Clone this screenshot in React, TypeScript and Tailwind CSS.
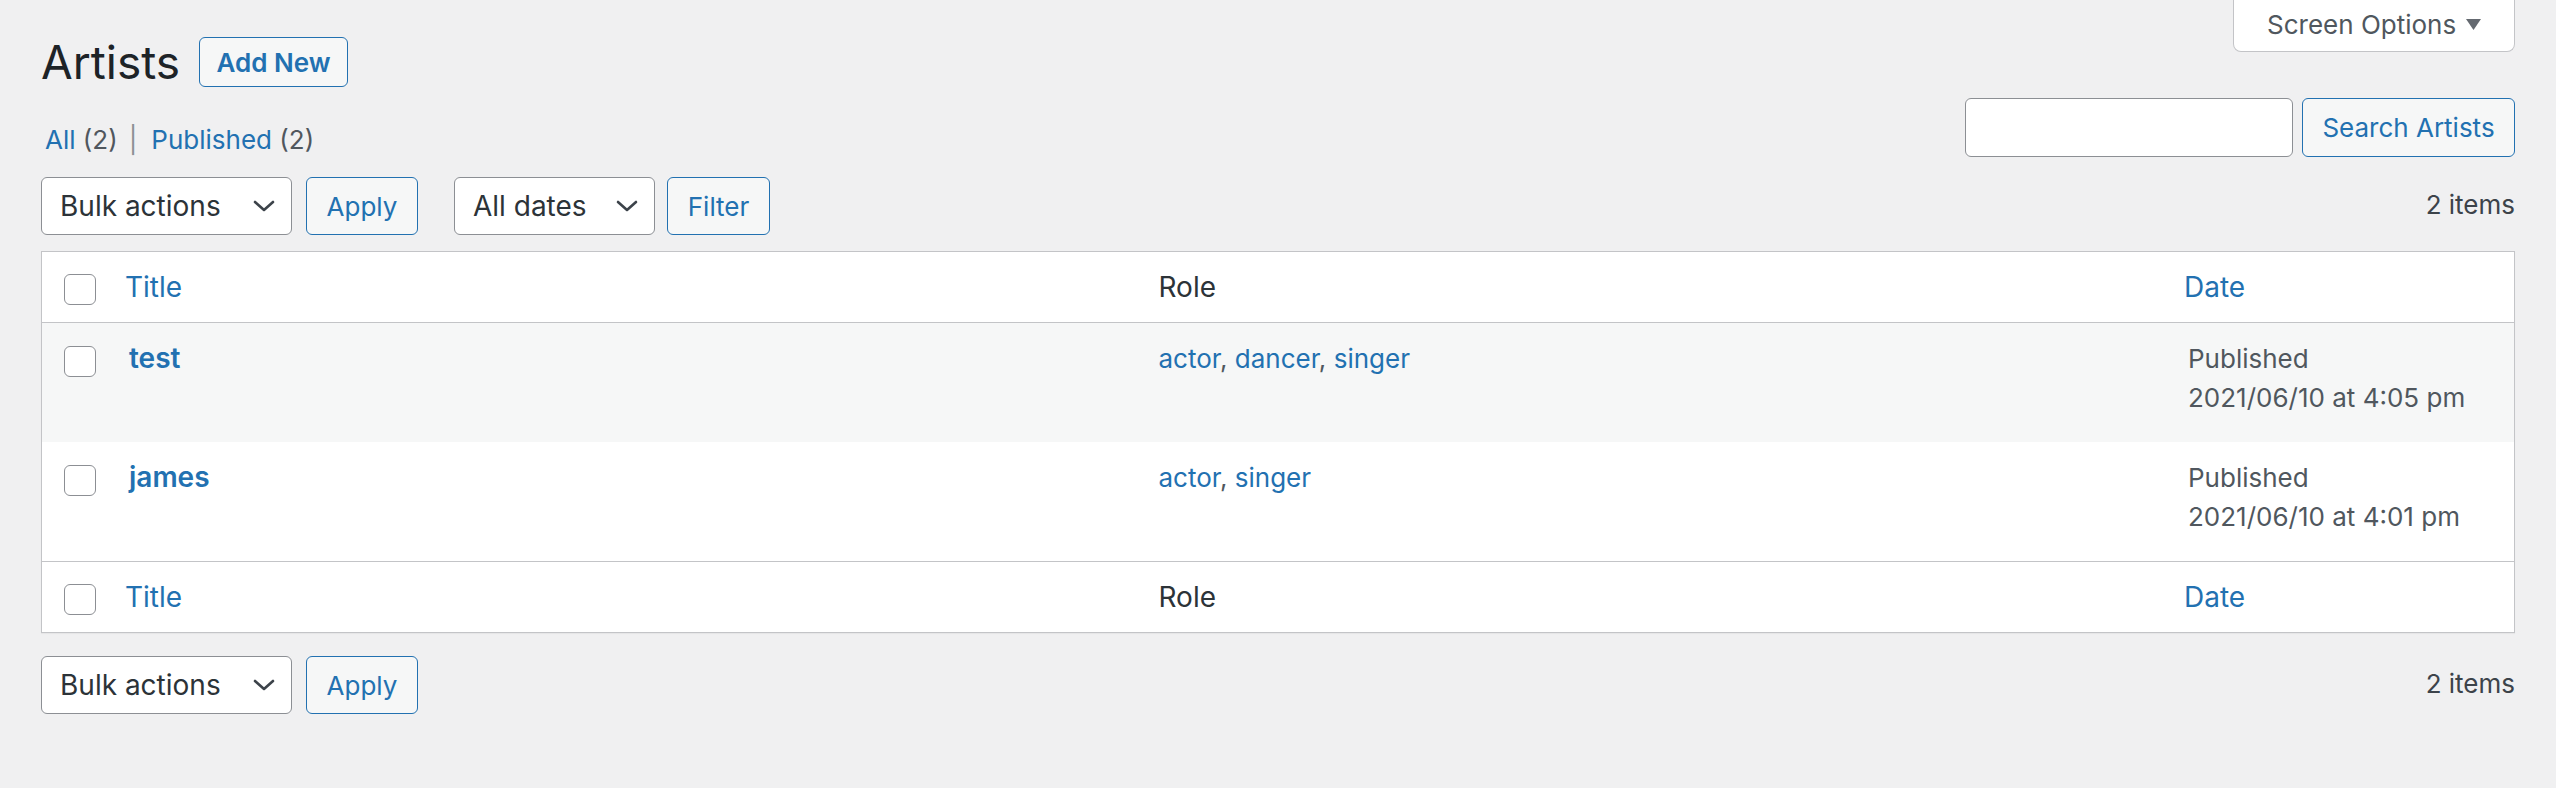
import React from 'react'

const rows = [
  { title: 'test', roles: ['actor', 'dancer', 'singer'], date: '2021/06/10 at 4:05 pm', striped: true },
  { title: 'james', roles: ['actor', 'singer'], date: '2021/06/10 at 4:01 pm', striped: false },
]

function Checkbox() {
  return <div className="w-[32px] h-[31px] rounded-[6px] border border-[#8c8f94] bg-white" />
}

function Chevron() {
  return (
    <svg width="22" height="12" viewBox="0 0 22 12" fill="none">
      <polyline points="2,2 11,10 20,2" stroke="#3c434a" strokeWidth="2.6" strokeLinecap="round" strokeLinejoin="round" />
    </svg>
  )
}

function SelectBox({ label, width }: { label: string; width: string }) {
  return (
    <div className={`${width} h-[58px] flex items-center justify-between pl-[18px] pr-[16px] bg-white border border-[#8c8f94] rounded-[6px] text-[28px] text-[#2c3338]`}>
      <span>{label}</span>
      <Chevron />
    </div>
  )
}

function Button({ label, width, className = '' }: { label: string; width: string; className?: string }) {
  return (
    <button className={`${width} h-[58px] flex items-center justify-center bg-[#f6f7f7] border border-[#2271b1] rounded-[6px] text-[26px] text-[#2271b1] ${className}`}>
      {label}
    </button>
  )
}

function HeadRow({ pos }: { pos: 'head' | 'foot' }) {
  const border = pos === 'head' ? 'border-b' : 'border-t'
  const cell = `${border} border-[#c3c4c7] align-top text-left font-normal`
  return (
    <tr>
      <th className={`${cell} pl-[22px] pt-[22px] pb-[17px]`}>
        <Checkbox />
      </th>
      <th className={`${cell} pl-[16px] pt-[16px] pb-[15px] text-[28px] leading-[39px] text-[#2271b1]`}>Title</th>
      <th className={`${cell} pl-[20px] pt-[16px] pb-[15px] text-[28px] leading-[39px] text-[#2c3338]`}>Role</th>
      <th className={`${cell} pl-[16px] pt-[16px] pb-[15px] text-[28px] leading-[39px] text-[#2271b1]`}>Date</th>
    </tr>
  )
}

function TableNav({ top }: { top?: boolean }) {
  return (
    <div className="flex items-center justify-between">
      <div className="flex items-center">
        <SelectBox label="Bulk actions" width="w-[251px]" />
        <Button label="Apply" width="w-[112px]" className="ml-[14px]" />
        {top && (
          <>
            <SelectBox label="All dates" width="w-[201px] ml-[36px]" />
            <Button label="Filter" width="w-[103px]" className="ml-[12px]" />
          </>
        )}
      </div>
      <span className="text-[26px] leading-[39px] text-[#3c434a] pb-[4px]">2 items</span>
    </div>
  )
}

export default function App() {
  return (
    <div className="min-h-screen bg-[#f0f0f1] px-[41px] font-[family-name:Inter,sans-serif] text-[#3c434a]">
      <div className="flex items-start justify-between">
        <div className="flex items-center gap-[19px] pt-[37px]">
          <h1 className="text-[46px] leading-[50px] font-normal text-[#1d2327]">Artists</h1>
          <button className="w-[149px] h-[50px] flex items-center justify-center bg-[#f6f7f7] border border-[#2271b1] rounded-[6px] text-[26px] font-semibold text-[#2271b1]">
            Add New
          </button>
        </div>
        <div className="w-[282px] h-[52px] flex items-center justify-between pl-[33px] pr-[33px] pb-[2px] bg-white border border-t-0 border-[#c3c4c7] rounded-b-[8px] text-[26px] text-[#50575e]">
          <span>Screen Options</span>
          <svg width="15" height="11" viewBox="0 0 15 11">
            <polygon points="0,0 15,0 7.5,11" fill="#646970" />
          </svg>
        </div>
      </div>

      <div className="flex items-start justify-between mt-[11px] h-[59px]">
        <div className="pt-[22px] pl-[4px] text-[26px] leading-[39px] text-[#50575e]">
          <span className="text-[#2271b1]">All</span> (2)
          <span className="ml-[11px] mr-[14px] text-[#8c8f94]">|</span>
          <span className="text-[#2271b1]">Published</span> (2)
        </div>
        <div className="flex items-center gap-[9px]">
          <div className="w-[328px] h-[59px] bg-white border border-[#8c8f94] rounded-[6px]" />
          <Button label="Search Artists" width="w-[213px] h-[59px]" />
        </div>
      </div>

      <div className="mt-[20px]">
        <TableNav top />
      </div>

      <table className="mt-[16px] w-full table-fixed border-separate border-spacing-0 border border-[#c3c4c7] bg-white shadow-[0_1px_1px_rgba(0,0,0,0.04)]">
        <colgroup>
          <col className="w-[67px]" />
          <col />
          <col />
          <col className="w-[346px]" />
        </colgroup>
        <thead>
          <HeadRow pos="head" />
        </thead>
        <tbody>
          {rows.map((r) => (
            <tr key={r.title} className={r.striped ? 'bg-[#f6f7f7]' : 'bg-white'}>
              <td className="h-[119px] align-top pl-[22px] pt-[23px]">
                <Checkbox />
              </td>
              <td className="align-top pl-[20px] pt-[16px] text-[28px] leading-[39px] font-semibold text-[#2271b1]">{r.title}</td>
              <td className="align-top pl-[20px] pt-[16px] text-[26px] leading-[39px] text-[#50575e]">
                {r.roles.map((role, i) => (
                  <React.Fragment key={role}>
                    <span className="text-[#2271b1]">{role}</span>
                    {i < r.roles.length - 1 && ', '}
                  </React.Fragment>
                ))}
              </td>
              <td className="align-top pl-[20px] pt-[16px] text-[26px] leading-[39px] text-[#50575e]">
                <div>Published</div>
                <div>{r.date}</div>
              </td>
            </tr>
          ))}
        </tbody>
        <tfoot>
          <HeadRow pos="foot" />
        </tfoot>
      </table>

      <div className="mt-[23px]">
        <TableNav />
      </div>
    </div>
  )
}
